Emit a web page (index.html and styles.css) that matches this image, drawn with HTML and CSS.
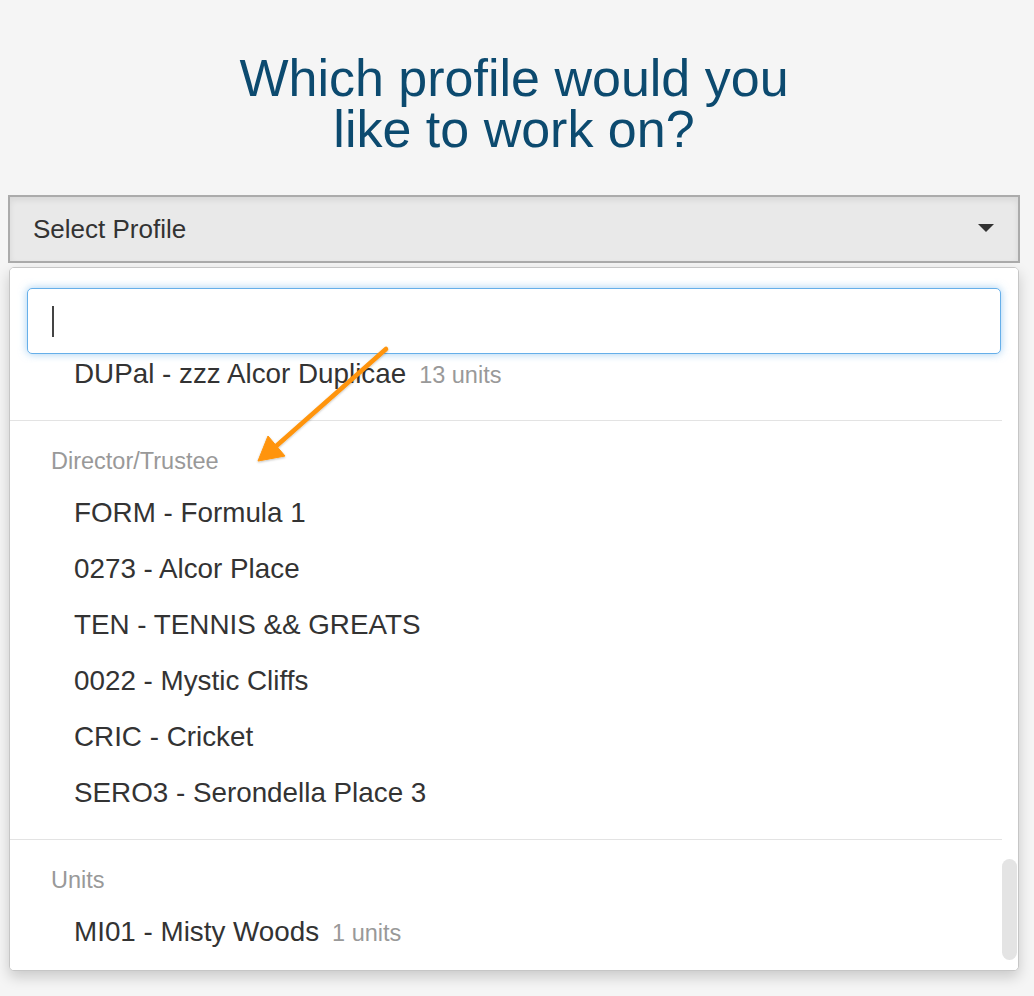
FILE: index.html
```html
<!DOCTYPE html>
<html lang="en">
<head>
<meta charset="utf-8">
<title>Select Profile</title>
<link rel="stylesheet" href="styles.css">
</head>
<body>
<main class="page">
  <h1 class="title">Which profile would you<br>like to work on?</h1>
  <div class="picker">
    <div class="select">
      <span class="select-label">Select Profile</span>
      <span class="select-arrow"></span>
    </div>
    <div class="dropdown">
      <div class="search">
        <div class="search-input"><span class="text-caret"></span></div>
      </div>
      <div class="results">
        <ul class="results-inner">
          <li class="group group-partial">
            <ul class="options">
              <li class="option">DUPal - zzz Alcor Duplicae<span class="units">13 units</span></li>
            </ul>
          </li>
          <li class="group">
            <div class="group-label">Director/Trustee</div>
            <ul class="options">
              <li class="option">FORM - Formula 1</li>
              <li class="option">0273 - Alcor Place</li>
              <li class="option">TEN - TENNIS &amp;&amp; GREATS</li>
              <li class="option">0022 - Mystic Cliffs</li>
              <li class="option">CRIC - Cricket</li>
              <li class="option">SERO3 - Serondella Place 3</li>
            </ul>
          </li>
          <li class="group group-last">
            <div class="group-label">Units</div>
            <ul class="options">
              <li class="option">MI01 - Misty Woods<span class="units">1 units</span></li>
            </ul>
          </li>
        </ul>
        <div class="scroll-thumb"></div>
      </div>
    </div>
  </div>
  <svg class="annotation" width="1034" height="996" viewBox="0 0 1034 996" aria-hidden="true">
    <defs>
      <filter id="sh" x="-20%" y="-20%" width="140%" height="140%">
        <feDropShadow dx="0" dy="1" stdDeviation="1.2" flood-color="#000" flood-opacity="0.25"/>
      </filter>
    </defs>
    <g filter="url(#sh)" fill="#ff9408" stroke="#ff9408">
      <line x1="386" y1="349" x2="274" y2="448" stroke-width="4.5" stroke-linecap="round"/>
      <polygon points="258,461 268,436 285,456" stroke-width="1" stroke-linejoin="round"/>
    </g>
  </svg>
</main>
</body>
</html>
```

FILE: styles.css
```css
* { box-sizing: border-box; }

html, body {
  margin: 0;
  padding: 0;
  background: #f5f5f5;
}

body {
  font-family: "Liberation Sans", Arial, Helvetica, sans-serif;
  color: #333;
}

.page {
  position: relative;
  width: 1034px;
  height: 996px;
  padding: 53px 14px 0 8px;
  overflow: hidden;
}

.title {
  margin: 0 0 40px;
  text-align: center;
  font-weight: normal;
  font-size: 52px;
  line-height: 51px;
  color: #0c4a6f;
}

.picker {
  width: 1012px;
}

.select {
  height: 68px;
  display: flex;
  align-items: center;
  justify-content: space-between;
  padding: 0 24px 0 23px;
  background: #e9e9e9;
  border: 2px solid #ababab;
  box-shadow: inset 0 3px 6px rgba(0, 0, 0, 0.08);
}

.select-label {
  font-size: 26px;
  color: #333;
}

.select-arrow {
  width: 0;
  height: 0;
  border-left: 8px solid transparent;
  border-right: 8px solid transparent;
  border-top: 8px solid #333;
  margin-top: -2px;
}

.dropdown {
  margin: 4px 1px 0;
  background: #fff;
  border: 1px solid #c6c6c6;
  border-radius: 5px;
  box-shadow: 0 6px 14px rgba(0, 0, 0, 0.18);
  overflow: hidden;
}

.search {
  padding: 20px 17px 9px;
  background: #fff;
}

.search-input {
  height: 66px;
  display: flex;
  align-items: center;
  padding-left: 24px;
  border: 1px solid #66afe9;
  border-radius: 5px;
  background: #fff;
  box-shadow: 0 0 8px rgba(102, 175, 233, 0.6);
}

.text-caret {
  width: 2px;
  height: 31px;
  background: #444;
}

.results {
  position: relative;
  height: 607px;
  background: #fff;
}

.results-inner {
  list-style: none;
  margin: 0 16px 0 0;
  padding: 0;
}

.group {
  padding: 23px 0 18px;
  border-bottom: 1px solid #e3e3e3;
}

.group-partial {
  padding-top: 0;
}

.group-partial .option {
  height: 39px;
  line-height: 22px;
}

.group-last {
  border-bottom: none;
  padding-bottom: 0;
}

.group-label {
  padding-left: 41px;
  height: 34px;
  line-height: 34px;
  margin-bottom: 7px;
  font-size: 23.5px;
  color: #999;
}

.options {
  list-style: none;
  margin: 0;
  padding: 0;
}

.option {
  height: 56px;
  line-height: 56px;
  padding-left: 64px;
  font-size: 27.8px;
  color: #333;
  white-space: nowrap;
}

.units {
  margin-left: 13px;
  font-size: 23.5px;
  color: #999;
}

.scroll-thumb {
  position: absolute;
  right: 1px;
  bottom: 10px;
  width: 15px;
  height: 101px;
  border-radius: 8px;
  background: #e4e4e4;
}

.annotation {
  position: absolute;
  left: 0;
  top: 0;
  pointer-events: none;
}
```
